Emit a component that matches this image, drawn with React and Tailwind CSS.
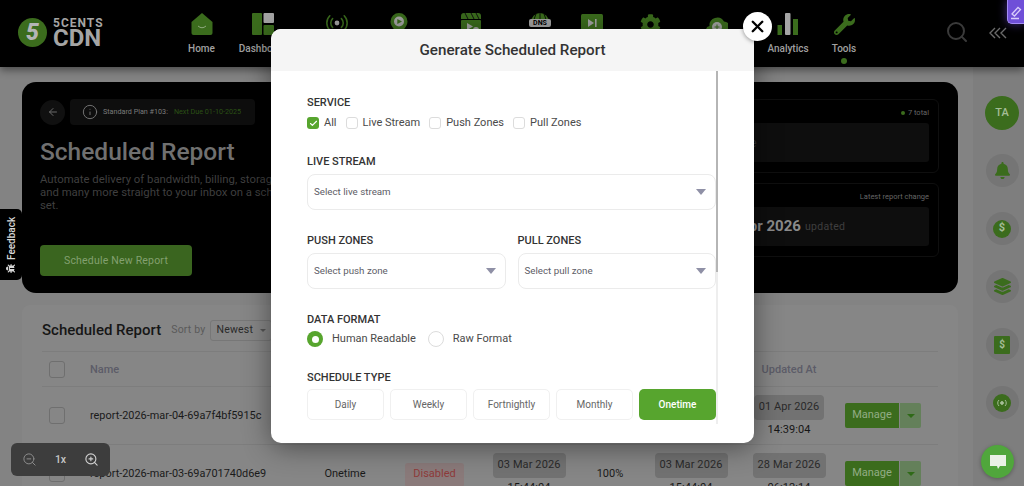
import React from "react";
import { Search, Check, X, ArrowLeft, Info, ZoomIn, ZoomOut } from "lucide-react";
import { FaBell, FaCog, FaLayerGroup, FaWrench, FaBug } from "react-icons/fa";

const G = "#3b6c1d";
const L = "#a5a5a5";

const HomeIcon = () => (
  <svg width="22" height="22" viewBox="0 0 22 22"><path d="M11 0 L21.500 9 V20 a2 2 0 0 1-2 2 H2.500 a2 2 0 0 1-2-2 V9 Z" fill={G} /><path d="M7 13 q4 3.500 8 0" stroke="#8fa97e" strokeWidth="1" fill="none" /></svg>
);
const DashIcon = () => (
  <svg width="22" height="22" viewBox="0 0 22 22"><rect width="10" height="22" rx="1" fill={G} /><rect x="11.500" width="10.500" height="10" rx="1" fill={L} /><rect x="11.500" y="12" width="10.500" height="10" rx="1" fill={G} /></svg>
);
const LiveIcon = () => (
  <svg width="22" height="22" viewBox="0 0 22 22" fill="none" stroke={G} strokeWidth="1.600" strokeLinecap="round"><circle cx="11" cy="10" r="2.400" fill={L} stroke="none" /><path d="M6.600 5.600a6.200 6.200 0 0 0 0 8.800M15.400 5.600a6.200 6.200 0 0 1 0 8.800M3.800 2.800a10.200 10.200 0 0 0 0 14.400M18.200 2.800a10.200 10.200 0 0 1 0 14.400" /></svg>
);
const VodIcon = () => (
  <svg width="22" height="22" viewBox="0 0 22 22"><path d="M11 0a8.500 8.500 0 0 1 8.500 8.500C19.500 14 14 18 11 21 8 18 2.500 14 2.500 8.500A8.500 8.500 0 0 1 11 0Z" fill={G} /><circle cx="11" cy="8.500" r="5" fill={L} /><path d="M9.300 6 L14 8.500 L9.300 11Z" fill={G} /></svg>
);
const ClipIcon = () => (
  <svg width="22" height="22" viewBox="0 0 22 22"><path d="M4 0 H18 a3 3 0 0 1 3 3 V6 H1 V3 a3 3 0 0 1 3-3Z" fill={G} /><rect x="1" y="7" width="20" height="15" rx="1" fill={G} /><path d="M5 0 L8 6 M11 0 L14 6 M16 0 L19 6" stroke="#111" strokeWidth="1" /><path d="M7 10 L13 13.500 L7 17Z" fill={L} /><circle cx="16" cy="17" r="3" fill={L} /></svg>
);
const DnsIcon = () => (
  <div className="relative h-[22px] w-[22px]">
    <svg width="22" height="22" viewBox="0 0 22 22"><path d="M2 9a9 9 0 0 1 18 0Z" fill={G} /><path d="M11 0V9M7 1 Q5 5 5 9M15 1 Q17 5 17 9" stroke="#000" strokeWidth="0.800" fill="none" /></svg>
    <span className="absolute left-0 top-[6px] flex h-[8px] w-[22px] items-center justify-center rounded-[2px] bg-[#a5a5a5] text-[7px] font-bold leading-none text-black">DNS</span>
  </div>
);
const NextIcon = () => (
  <svg width="22" height="22" viewBox="0 0 22 22"><rect y="1" width="22" height="21" rx="1.500" fill={G} /><path d="M7 6 L13 10 L7 14Z" fill={L} /><rect x="14" y="6" width="1.600" height="8" fill={L} /></svg>
);
const CloudIcon = () => (
  <svg width="22" height="22" viewBox="0 0 22 22"><path d="M4.500 22a4.500 4.500 0 0 1-1-8.900 A7.800 7.800 0 0 1 18 8.500a6.700 6.700 0 0 1-.5 13.500Z" fill={G} /><circle cx="11" cy="14" r="5" fill={L} /><path d="M11 11.500v5M8.500 14h5" stroke={G} strokeWidth="1" /></svg>
);
const BarsIcon = () => (
  <svg width="22" height="22" viewBox="0 0 22 22"><rect x="0.500" y="12" width="4.500" height="10" fill={G} /><rect x="8" y="0" width="5.500" height="22" rx="1" fill={L} /><rect x="16" y="6" width="5" height="16" fill={G} /></svg>
);

const nav = [
  { label: "Home", w: "w-[25px]", icon: <HomeIcon /> },
  { label: "Dashboard", w: "w-[50px]", icon: <DashIcon /> },
  { label: "Live", w: "w-[50px]", icon: <LiveIcon /> },
  { label: "VOD", w: "w-[26px]", icon: <VodIcon /> },
  { label: "Transcoder", w: "w-[70px]", icon: <ClipIcon /> },
  { label: "DNS", w: "w-[20px]", icon: <DnsIcon /> },
  { label: "Next", w: "w-[36px]", icon: <NextIcon /> },
  { label: "Setup", w: "w-[32px]", icon: <FaCog size={21} color={G} /> },
  { label: "Storage", w: "w-[54px]", icon: <CloudIcon /> },
  { label: "Analytics", w: "w-[40px]", icon: <BarsIcon /> },
  { label: "Tools", w: "w-[24px]", icon: <FaWrench size={21} color={G} />, active: true },
];

const cols = "grid grid-cols-[48px_215px_80px_99px_90px_72px_90px_106px_96px] items-center";

const Box = () => <span className="block h-[17px] w-[16px] rounded-[3px] border border-[#6f6f6f]" />;

const DateCell = ({ date, time, wide }) => (
  <div className="flex flex-col items-center gap-[3px]">
    <span className={`flex h-[25px] items-center justify-center rounded-[4px] bg-[#727272] text-[11px] tracking-[0.1px] text-[#2a2a2a] ${wide ? "w-[73px]" : "w-[70px]"}`}>{date}</span>
    <span className="text-[11px] leading-[14px] tracking-[0.1px] text-[#161616]">{time}</span>
  </div>
);

const ManageBtn = () => (
  <div className="flex h-[25px] pl-[3px]">
    <span className="flex w-[54px] items-center justify-center rounded-l-[2px] bg-[#3b6c1d] text-[11px] text-[#93ad85]">Manage</span>
    <span className="ml-px flex w-[21px] items-center justify-center rounded-r-[2px] bg-[#64805a]">
      <span className="h-0 w-0 border-x-[4px] border-t-[4px] border-x-transparent border-t-[#2f6a17]" />
    </span>
  </div>
);

const rows = [
  { name: "report-2026-mar-04-69a7f4bf5915c", a: "04 Mar 2026", at: "14:39:04", b: "04 Mar 2026", bt: "14:39:04", c: "01 Apr 2026", ct: "14:39:04", cw: false },
  { name: "report-2026-mar-03-69a701740d6e9", a: "03 Mar 2026", at: "15:44:04", b: "03 Mar 2026", bt: "15:44:04", c: "28 Mar 2026", ct: "06:12:14", cw: true },
];

const heads = ["Type", "Status", "Created At", "Progress", "Scheduled", "Updated At"];

const Caret = () => <span className="h-0 w-0 border-x-[5px] border-t-[6px] border-x-transparent border-t-[#8f90a6]" />;

const Select = ({ children }) => (
  <div className="flex h-[36px] items-center justify-between rounded-[8px] border border-[#ebebeb] pl-[6px] pr-[9px] text-[9.750px] text-[#5d5d66]">
    <span>{children}</span>
    <Caret />
  </div>
);

const Label = ({ children }) => <div className="text-[11px] font-medium leading-[14px] text-[#333]">{children}</div>;

const CheckItem = ({ children, on }) => (
  <label className="flex items-center gap-[5px] text-[11px] text-[#4a4a4a]">
    {on ? (
      <span className="flex h-[12px] w-[12px] items-center justify-center rounded-[3px] bg-[#57a52e]"><Check size={9} color="#fff" strokeWidth={3} /></span>
    ) : (
      <span className="h-[12px] w-[12px] rounded-[3px] border border-[#dcdcdc]" />
    )}
    {children}
  </label>
);

const SideCircle = ({ children }) => (
  <div className="flex h-[33px] w-[33px] items-center justify-center rounded-full bg-[#757575]">{children}</div>
);

export default function App() {
  return (
    <div className="relative h-[486px] w-[1024px] overflow-hidden bg-[#838383] font-['Roboto',sans-serif]">
      {/* Top bar */}
      <header className="relative z-10 flex h-[67px] bg-black shadow-[0_3px_8px_rgba(0,0,0,0.45)]">
        <div className="flex w-[189px] items-start pl-[18px] pt-[18px]">
          <span className="flex h-[29px] w-[29px] items-center justify-center rounded-full bg-[#3b6c1d] text-[23px] font-black italic leading-none text-[#b5b5b5]">5</span>
          <div className="ml-[6px] flex flex-col">
            <span className="text-[12px] font-bold leading-[11px] tracking-[1px] text-[#a5a5a5]">5CENTS</span>
            <span className="text-[24px] font-bold leading-[19px] text-[#a5a5a5]">CDN</span>
          </div>
        </div>
        <nav className="flex gap-6 pt-[13px]">
          {nav.map((n) => (
            <div key={n.label} className={`relative flex flex-col items-center ${n.w}`}>
              <div className="flex h-[22px] w-[22px] items-center justify-center">{n.icon}</div>
              <span className="mt-[7.500px] whitespace-nowrap text-[10px] font-medium leading-[12px] text-[#a0a0a0]">{n.label}</span>
              {n.active && <span className="mt-[3px] h-[6px] w-[6px] rounded-full bg-[#3b6c1d]" />}
            </div>
          ))}
        </nav>
        <div className="ml-[89px] flex items-start gap-[20px] pt-[20px]">
          <Search size={24} color="#3a3a3a" strokeWidth={2} />
          <svg width="18" height="12" viewBox="0 0 18 12" fill="none" stroke="#6b6b6b" strokeWidth="1.400" className="mt-[7px]"><path d="M6 1 L1 6 L6 11M11 1 L6 6 L11 11M17 1 L12 6 L17 11" /></svg>
        </div>
        <div className="absolute right-0 top-0 flex h-[24px] w-[17px] items-start justify-center rounded-bl-[5px] border-b border-l border-[#a48cf5] bg-[#6f4fd8] pt-[6px] shadow-[0_0_10px_rgba(111,79,216,0.6)]">
          <svg width="12" height="14" viewBox="0 0 12 14" fill="none" stroke="#d9cdfb" strokeWidth="1.300"><path d="M2 8 L8 1.500 L10.500 3.500 L4.500 10 Z M1 12.500 H9" /></svg>
        </div>
      </header>

      <div className="flex h-[419px]">
        <main className="w-[973px] shrink-0 pl-[22px] pr-[15px] pt-[15px]">
          {/* Hero */}
          <section className="flex h-[211px] rounded-[14px] bg-black pl-[18px] pr-[19px] pt-[17px]">
            <div className="flex-1">
              <div className="flex items-center gap-[5px]">
                <span className="flex h-[25px] w-[25px] items-center justify-center rounded-full bg-[#101010]"><ArrowLeft size={12} color="#6a6a6a" /></span>
                <div className="flex h-[26px] w-[185px] items-center rounded-[4px] bg-[#0e0e0e] pl-[12px]">
                  <Info size={16} color="#777" strokeWidth={1.400} />
                  <span className="ml-[5px] text-[7.200px] text-[#7b7b7b]">Standard Plan #103:</span>
                  <span className="ml-[6px] text-[7.200px] text-[#2b5015]">Next Due 01-10-2025</span>
                </div>
              </div>
              <h1 className="mt-[12px] text-[24.500px] font-medium leading-[30px] text-[#707070]">Scheduled Report</h1>
              <p className="mt-[6px] text-[11.350px] leading-[13px] text-[#3f3f3f]">
                Automate delivery of bandwidth, billing, storage and other usage reports<br />
                and many more straight to your inbox on a schedule that you have<br />
                set.
              </p>
              <button className="mt-[33px] flex h-[31px] w-[152px] items-center justify-center rounded-[4px] bg-[#3a651f] text-[10.500px] tracking-[0.2px] text-[#83a070]">Schedule New Report</button>
            </div>
            <div className="flex w-[270px] flex-col gap-[10px]">
              <div className="flex h-[74px] flex-col rounded-[6px] border border-[#0f0f0f] px-[9px] pt-[6px]">
                <div className="flex items-center justify-between pl-[48px] text-[7.500px] leading-[14px] text-[#666]">
                  <span>Reports</span>
                  <span className="flex items-center gap-[3px]"><span className="h-[4px] w-[4px] rounded-full bg-[#3b6c1d]" />7 total</span>
                </div>
                <div className="mt-[3px] flex h-[39px] items-center rounded-[3px] bg-[#0e0e0e] pl-[29px] text-[13px] text-[#333]">Onetime</div>
              </div>
              <div className="flex h-[74px] flex-col rounded-[6px] border border-[#0f0f0f] px-[9px] pt-[6px]">
                <div className="flex justify-end text-[7.500px] leading-[14px] text-[#666]">Latest report change</div>
                <div className="mt-[3px] flex h-[39px] items-center rounded-[3px] bg-[#0e0e0e] pl-[60px]">
                  <span className="text-[15px] font-bold text-[#8a8a8a]">Apr 2026</span>
                  <span className="ml-[4px] text-[10.500px] tracking-[0.3px] text-[#3f3f3f]">updated</span>
                </div>
              </div>
            </div>
          </section>

          {/* Table card */}
          <section className="mt-[12px] h-[300px] rounded-t-[8px] bg-[#868686] px-[20px]">
            <div className="flex h-[47px] items-center border-b border-[#7d7d7d] pt-[4px]">
              <h2 className="text-[15px] font-medium text-[#161616]">Scheduled Report</h2>
              <span className="ml-[10px] text-[10.500px] tracking-[0.2px] text-[#5a5a5a]">Sort by</span>
              <span className="ml-[4px] flex h-[21px] w-[62px] items-center justify-between rounded-[3px] border border-[#777] pl-[6px] pr-[5px] text-[10.500px] tracking-[0.2px] text-[#2a2a2a]">
                Newest <span className="h-0 w-0 border-x-[3px] border-t-[3px] border-x-transparent border-t-[#555]" />
              </span>
            </div>
            <div className={`${cols} h-[35px] border-b border-[#7d7d7d] text-[11px] font-medium text-[#5c5c68]`}>
              <div className="pl-[7px]"><Box /></div>
              <div className="pt-[2px]">Name</div>
              {heads.map((h) => (
                <div key={h} className="pt-[2px] text-center">{h}</div>
              ))}
              <div />
            </div>
            {rows.map((r) => (
              <div key={r.name} className={`${cols} h-[58px] border-b border-[#7d7d7d] text-[10.900px] text-[#1a1a1a]`}>
                <div className="pl-[7px]"><Box /></div>
                <div className="whitespace-nowrap pt-[2px]">{r.name}</div>
                <div className="pt-[2px] text-center text-[11px]">Onetime</div>
                <div className="flex justify-center pt-[2px]">
                  <span className="flex h-[24px] w-[59px] items-center justify-center rounded-[3px] bg-[#8a7a7a] text-[11px] text-[#8f3a3a]">Disabled</span>
                </div>
                <DateCell date={r.a} time={r.at} wide />
                <div className="pt-[2px] text-center text-[11px]">100%</div>
                <DateCell date={r.b} time={r.bt} wide />
                <DateCell date={r.c} time={r.ct} wide={r.cw} />
                <ManageBtn />
              </div>
            ))}
          </section>
        </main>

        {/* Right rail */}
        <aside className="flex w-[51px] flex-col items-center gap-[25px] bg-[#7e7e7e] pl-[7px] pt-[29px]">
          <div className="-mb-[1px] flex h-[34px] w-[34px] items-center justify-center rounded-full bg-[#3b6c1d] text-[11px] font-medium text-[#a5bd97]">TA</div>
          <SideCircle><FaBell size={17} color="#3b6c1d" /></SideCircle>
          <SideCircle>
            <span className="flex h-[18px] w-[18px] items-center justify-center rounded-full bg-[#3b6c1d] text-[11px] font-bold text-[#a5bd97]">$</span>
          </SideCircle>
          <SideCircle><FaLayerGroup size={17} color="#3b6c1d" /></SideCircle>
          <SideCircle>
            <span className="flex h-[18px] w-[16px] items-center justify-center rounded-[1px] bg-[#3b6c1d] text-[10px] font-bold text-[#a5bd97]">$</span>
          </SideCircle>
          <SideCircle>
            <span className="flex h-[18px] w-[18px] items-center justify-center rounded-full bg-[#3b6c1d]">
              <svg width="12" height="12" viewBox="0 0 12 12" fill="none" stroke="#a5bd97" strokeWidth="1"><circle cx="6" cy="6" r="1.400" fill="#a5bd97" /><path d="M3 3a4.200 4.200 0 0 0 0 6M9 3a4.200 4.200 0 0 1 0 6" /></svg>
            </span>
          </SideCircle>
        </aside>
      </div>

      {/* Feedback tab */}
      <div className="absolute left-0 top-[209px] z-20 flex h-[71px] w-[22px] items-center justify-center gap-[4px] rounded-l-[5px] bg-black [writing-mode:vertical-rl] rotate-180 text-[10px] font-medium text-[#d8d8d8]">
        <FaBug size={9} color="#d8d8d8" className="rotate-90" />
        <span>Feedback</span>
      </div>

      {/* Zoom control */}
      <div className="absolute left-[11px] top-[443px] z-20 flex h-[33px] w-[99px] items-center justify-between rounded-[6px] bg-[#3d3d3d] px-[11px]">
        <ZoomOut size={15} color="#8c8c8c" strokeWidth={1.600} />
        <span className="text-[10.500px] font-medium text-[#c8c8c8]">1x</span>
        <ZoomIn size={15} color="#d0d0d0" strokeWidth={1.800} />
      </div>

      {/* Chat */}
      <div className="absolute left-[981px] top-[445px] z-20 flex h-[33px] w-[33px] items-center justify-center rounded-full bg-[#50a63c] shadow-[0_1px_4px_rgba(0,0,0,0.3)]">
        <svg width="18" height="16" viewBox="0 0 18 16"><path d="M1 1 H17 V12 H11 L9 15 L8 12 H1 Z" fill="#e9f1e6" /></svg>
      </div>

      {/* Modal */}
      <div className="absolute left-[271px] top-[29px] z-30 flex h-[414px] w-[483px] flex-col rounded-[10px] bg-white shadow-[0_4px_28px_rgba(0,0,0,0.45)]">
        <div className="flex h-[42px] shrink-0 items-center justify-center rounded-t-[10px] bg-[#f5f5f5] text-[15.200px] font-medium text-[#333]">Generate Scheduled Report</div>
        <div className="relative h-[353px] pl-[36px] pr-[38px] pt-[25px]">
          <Label>SERVICE</Label>
          <div className="mt-[6px] flex h-[14px] items-center gap-[9px]">
            <CheckItem on>All</CheckItem>
            <CheckItem>Live Stream</CheckItem>
            <CheckItem>Push Zones</CheckItem>
            <CheckItem>Pull Zones</CheckItem>
          </div>
          <div className="mt-[25px]"><Label>LIVE STREAM</Label></div>
          <div className="mt-[5px]"><Select>Select live stream</Select></div>
          <div className="mt-[24px] grid grid-cols-2 gap-[12px]">
            <div>
              <Label>PUSH ZONES</Label>
              <div className="mt-[5px]"><Select>Select push zone</Select></div>
            </div>
            <div>
              <Label>PULL ZONES</Label>
              <div className="mt-[5px]"><Select>Select pull zone</Select></div>
            </div>
          </div>
          <div className="mt-[24px]"><Label>DATA FORMAT</Label></div>
          <div className="mt-[4px] flex h-[16px] items-center text-[11px] text-[#4a4a4a]">
            <span className="flex h-[16px] w-[16px] items-center justify-center rounded-full bg-[#57a52e]"><span className="h-[7px] w-[7px] rounded-full bg-white" /></span>
            <span className="ml-[9px]">Human Readable</span>
            <span className="ml-[12px] h-[16px] w-[16px] rounded-full border border-[#dcdcdc]" />
            <span className="ml-[9px]">Raw Format</span>
          </div>
          <div className="mt-[24px]"><Label>SCHEDULE TYPE</Label></div>
          <div className="mt-[4px] grid grid-cols-5 gap-[6px] text-[10px] text-[#666]">
            {["Daily", "Weekly", "Fortnightly", "Monthly"].map((t) => (
              <span key={t} className="flex h-[31px] items-center justify-center rounded-[5px] border border-[#f0f0f0]">{t}</span>
            ))}
            <span className="flex h-[31px] items-center justify-center rounded-[5px] bg-[#57a52e] font-medium text-white">Onetime</span>
          </div>
          {/* Scrollbar */}
          <div className="absolute right-[36px] top-0 h-full w-[2px] bg-[#eeeeee]">
            <div className="h-[201px] w-full bg-[#b5b5b5]" />
          </div>
        </div>
        {/* Close */}
        <button className="absolute -right-[18px] -top-[17px] flex h-[29px] w-[29px] items-center justify-center rounded-full bg-white shadow-[0_1px_4px_rgba(0,0,0,0.4)]">
          <X size={19} color="#000" strokeWidth={3} />
        </button>
      </div>
    </div>
  );
}
